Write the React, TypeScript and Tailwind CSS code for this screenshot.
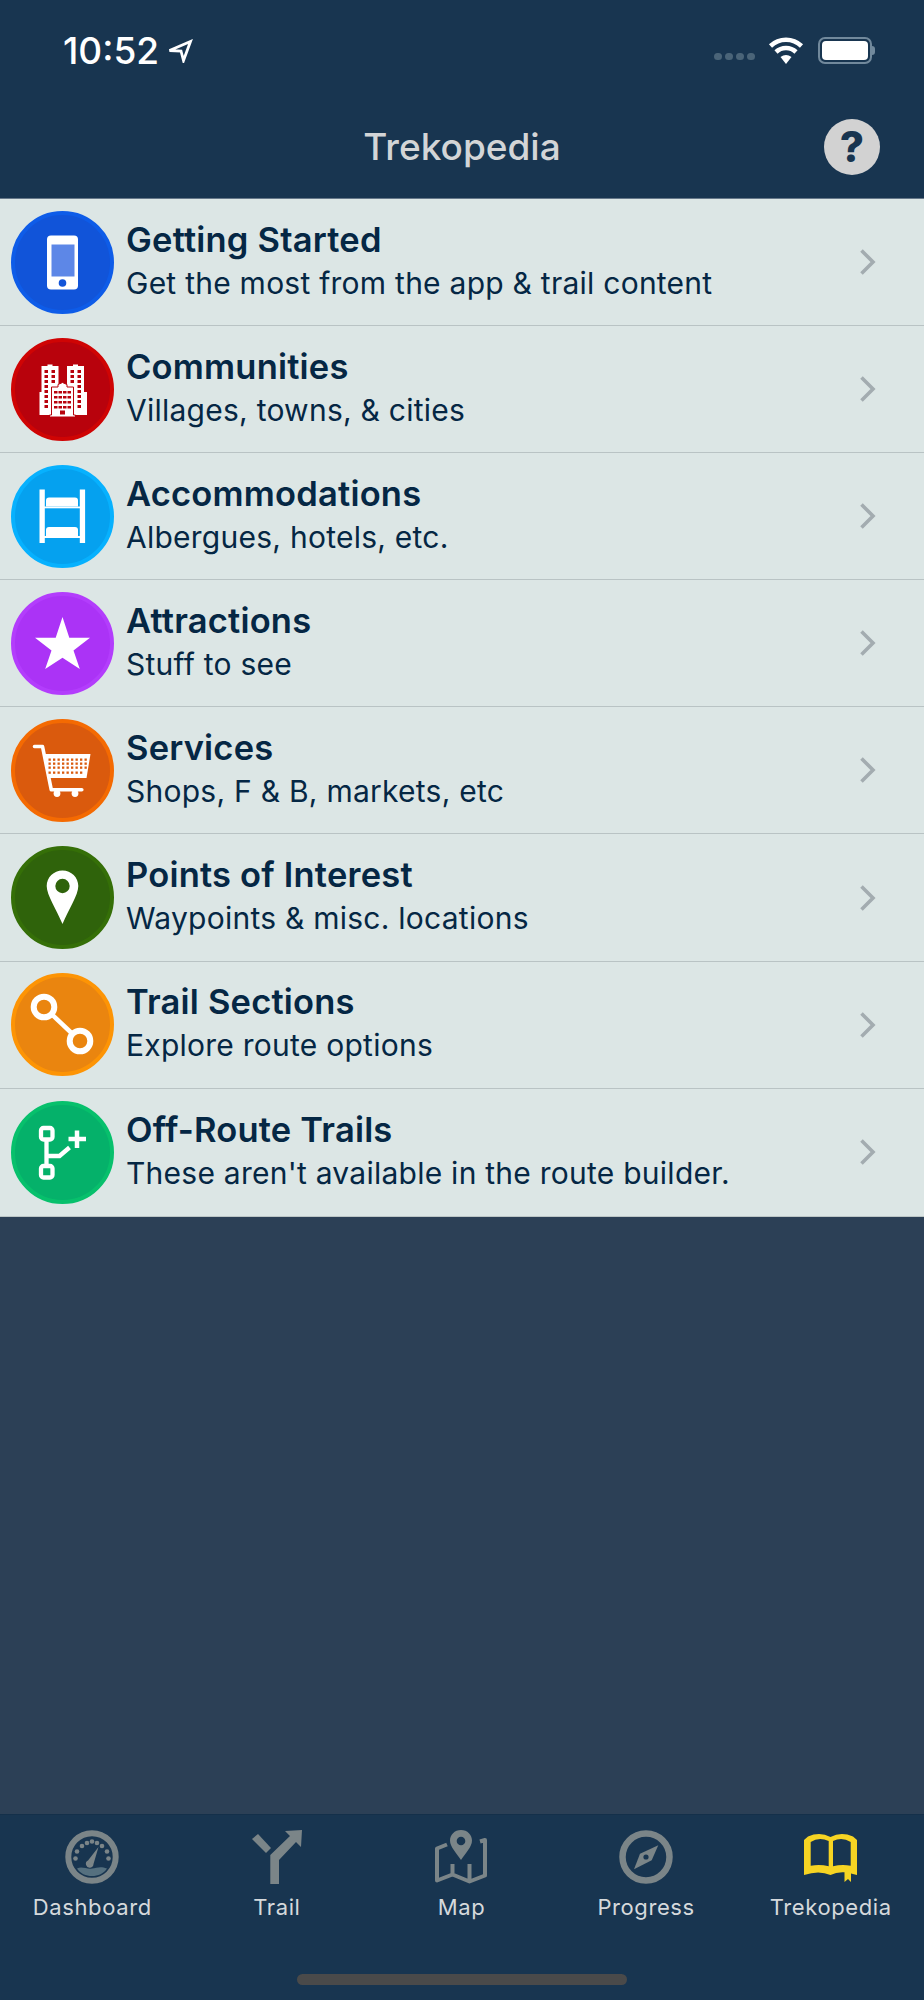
import type { ReactNode } from "react";

const WHITE = "#ffffff";

function Disc({ fill, ring, children }: { fill: string; ring: string; children: ReactNode }) {
  return (
    <svg viewBox="0 0 103 103" className="h-[103px] w-[103px] shrink-0">
      <circle cx="51.5" cy="51.5" r="49.5" fill={fill} stroke={ring} strokeWidth="4" />
      {children}
    </svg>
  );
}

function PhoneIcon() {
  return (
    <Disc fill="#1154d9" ring="#0e5ce8">
      <rect x="36" y="24.5" width="31" height="54" rx="4" fill={WHITE} />
      <rect x="40.5" y="33.5" width="23" height="32" fill="#5d87e7" />
      <circle cx="51.5" cy="72" r="3.8" fill="#1154d9" />
    </Disc>
  );
}

function BuildingsIcon() {
  const red = "#b8020c";
  return (
    <Disc fill={red} ring="#cf0404">
      <path d="M30.500 28h6v-1.500h5v1.500h6v22h-5v27h-14v-23h2zM56 28h6v-1.500h5v1.500h6v26h3v23h-16v-27h-4z" fill={WHITE} />
      {[32, 37, 42, 47, 52, 57, 62, 67].map((y) => (
        <g key={y} fill={red}>
          <rect x="33.500" y={y} width="3.500" height="3" />
          <rect x="66.500" y={y} width="3.500" height="3" />
        </g>
      ))}
      {[32, 37, 42].map((y) => (
        <g key={y} fill={red}>
          <rect x="40.500" y={y} width="3.500" height="3" />
          <rect x="59.500" y={y} width="3.500" height="3" />
        </g>
      ))}
      <path d="M38.500 79v-2h2V49h6.500v-2.500l4.500-2 4.500 2V49h6.500v28h2v2z" fill={WHITE} stroke={red} strokeWidth="1" />
      {[53, 58, 63, 68].map((y) => (
        <g key={y} fill={red}>
          <rect x="43" y={y} width="3.500" height="2.500" />
          <rect x="47.500" y={y} width="3.500" height="2.500" />
          <rect x="52" y={y} width="3.500" height="2.500" />
          <rect x="56.500" y={y} width="3.500" height="2.500" />
        </g>
      ))}
      <rect x="49" y="72.500" width="5" height="4" fill={red} />
    </Disc>
  );
}

function BunkIcon() {
  return (
    <Disc fill="#05a1ef" ring="#07b1fe">
      <rect x="28.500" y="24.500" width="5.300" height="53.500" fill={WHITE} />
      <rect x="68.800" y="24.500" width="5.300" height="53.500" fill={WHITE} />
      <path d="M35 41.500v-6q0-3 3-3h26q3 0 3 3v6z" fill={WHITE} />
      <path d="M35 71v-6q0-3 3-3h26q3 0 3 3v6z" fill={WHITE} />
      <rect x="33" y="41.500" width="36" height="1.800" fill={WHITE} />
      <rect x="33" y="71" width="36" height="2" fill={WHITE} />
    </Disc>
  );
}

function StarIcon() {
  return (
    <Disc fill="#ab33f6" ring="#b33dfc">
      <polygon points="51.500,25 58.300,45.800 79,45.800 62.500,58.400 68.800,77 51.500,65.700 34.200,77 40.500,58.400 24,45.800 44.700,45.800" fill={WHITE} />
    </Disc>
  );
}

function CartIcon() {
  const fill = "#da5a0d";
  return (
    <Disc fill={fill} ring="#f46a02">
      <path d="M23.500 27.500h8l8.800 43.300h30.500" fill="none" stroke={WHITE} strokeWidth="3.600" strokeLinecap="round" strokeLinejoin="round" />
      <polygon points="33,35 79.500,35 75.500,59 37.500,59" fill={WHITE} />
      {[39.500, 43.500, 47.500, 52.500].map((y, r) =>
        [37.500, 42, 46.500, 51, 55.500, 60, 64.500, 69, 73.500].map((x, c) =>
          c === 8 && r === 3 ? null : <rect key={`${r}-${c}`} x={x} y={y} width="2.300" height="2.300" fill={fill} />,
        ),
      )}
      <circle cx="46" cy="74.500" r="3.400" fill={WHITE} />
      <circle cx="64" cy="74.500" r="3.400" fill={WHITE} />
    </Disc>
  );
}

function PinIcon() {
  return (
    <Disc fill="#2f630b" ring="#356f08">
      <path d="M51.500 24.500c-8.800 0-15.800 7-15.800 15.500 0 9 9.500 23 15.800 38 6.300-15 15.800-29 15.800-38 0-8.500-7-15.500-15.800-15.500z" fill={WHITE} />
      <circle cx="51.500" cy="40" r="7.200" fill="#2f630b" />
    </Disc>
  );
}

function SectionIcon() {
  return (
    <Disc fill="#ea850f" ring="#fd9405">
      <line x1="33" y1="34" x2="69" y2="68" stroke={WHITE} strokeWidth="4.500" />
      <circle cx="33" cy="34" r="10.300" fill="#ea850f" stroke={WHITE} strokeWidth="6" />
      <circle cx="69" cy="68" r="10.300" fill="#ea850f" stroke={WHITE} strokeWidth="6" />
    </Disc>
  );
}

function BranchIcon() {
  return (
    <Disc fill="#05b16a" ring="#07c06c">
      <rect x="30" y="27" width="11.500" height="11.500" rx="2.500" fill="none" stroke={WHITE} strokeWidth="4.300" />
      <rect x="30" y="65" width="11.500" height="11.500" rx="2.500" fill="none" stroke={WHITE} strokeWidth="4.300" />
      <path d="M35.500 38v27M35.500 55h13l10-8.500" fill="none" stroke={WHITE} strokeWidth="4.300" />
      <path d="M57.500 38h17.500M66 29.500v17.500" stroke={WHITE} strokeWidth="4.500" />
    </Disc>
  );
}

const GRAY = "#7b8588";

function DashboardTab() {
  const dots = [
    [10.500, 28.500],
    [12, 21.500],
    [17, 16],
    [22, 13],
    [27, 11.500],
    [32, 13],
    [37, 16],
    [42, 21.500],
    [43.500, 28.500],
  ];
  return (
    <svg viewBox="0 0 54 54" className="h-[54px] w-[54px]">
      <circle cx="27" cy="27" r="23.700" fill="none" stroke={GRAY} strokeWidth="6" />
      {dots.map(([x, y]) => (
        <circle key={x} cx={x} cy={y} r="2.300" fill={GRAY} />
      ))}
      <path d="M23 30.500 33.500 17l-5 17a3.800 3.800 0 1 1-5.500-3.500z" fill={GRAY} />
      <path d="M12 38.500c5-2.500 10 1 15 0s9-2.500 15 0c-3 5-9 7.500-15 7.500s-12-2.500-15-7.500z" fill="#55707f" />
    </svg>
  );
}

function TrailTab() {
  return (
    <svg viewBox="0 0 50 54" className="h-[54px] w-[50px]">
      <path d="M18.300 54V25L38 6l-5-5 17-1-1 17-5-5-17 18v23.500q0 .5-.5.500z" fill={GRAY} />
      <polygon points="0,9 6,4 19,18 14,23" fill={GRAY} />
    </svg>
  );
}

function MapTab() {
  return (
    <svg viewBox="0 0 52 54" className="h-[54px] w-[52px]">
      <path d="M12 14.500 2 18.500v32l15.500-6 17 7 15.500-6V10l-5 1.500M17.500 34v10.500M34.500 34v17" fill="none" stroke={GRAY} strokeWidth="4" strokeLinejoin="round" />
      <path d="M26 0c-6.500 0-11 5-11 10.500C15 17 21.500 23 26 30c4.500-7 11-13 11-19.500C37 5 32.500 0 26 0z" fill={GRAY} />
      <circle cx="26" cy="11" r="4.300" fill="#183550" />
    </svg>
  );
}

function CompassTab() {
  return (
    <svg viewBox="0 0 54 54" className="h-[54px] w-[54px]">
      <circle cx="27" cy="27" r="23.500" fill="none" stroke={GRAY} strokeWidth="6.500" />
      <polygon points="39.300,15.300 32.700,30.300 15,39.300 21,23.700" fill={GRAY} />
      <circle cx="27" cy="27" r="2.600" fill="#183550" />
    </svg>
  );
}

function BookTab() {
  return (
    <svg viewBox="0 0 53 49" className="h-[49px] w-[53px]">
      <path
        fillRule="evenodd"
        d="M0 7 4 3.500Q16-1.500 26.500 4 37-1.500 49 3.500L53 7v35l-6-1.500V49l-3-3-3.500 3v-9.800q-8-.5-14 2.800Q15 37 0 42zM6.700 9v23.700q9-1.800 18 .5V8Q15 3.500 6.700 9zM29 8v25.200q9-2.300 17.700-.5V9Q38 3.500 29 8z"
        fill="#f6d423"
      />
    </svg>
  );
}

const rows = [
  { title: "Getting Started", sub: "Get the most from the app & trail content", icon: <PhoneIcon /> },
  { title: "Communities", sub: "Villages, towns, & cities", icon: <BuildingsIcon /> },
  { title: "Accommodations", sub: "Albergues, hotels, etc.", icon: <BunkIcon /> },
  { title: "Attractions", sub: "Stuff to see", icon: <StarIcon /> },
  { title: "Services", sub: "Shops, F & B, markets, etc", icon: <CartIcon /> },
  { title: "Points of Interest", sub: "Waypoints & misc. locations", icon: <PinIcon /> },
  { title: "Trail Sections", sub: "Explore route options", icon: <SectionIcon /> },
  { title: "Off-Route Trails", sub: "These aren't available in the route builder.", icon: <BranchIcon /> },
];

const tabs = [
  { label: "Dashboard", icon: <DashboardTab /> },
  { label: "Trail", icon: <TrailTab /> },
  { label: "Map", icon: <MapTab /> },
  { label: "Progress", icon: <CompassTab /> },
  { label: "Trekopedia", icon: <BookTab /> },
];

function StatusBar() {
  return (
    <div className="flex h-[100px] items-start justify-between pl-[63px] pr-[49px] pt-[31px]">
      <div className="flex items-center gap-[8px]">
        <span className="text-[37px] font-medium leading-[40px] text-white">10:52</span>
        <svg viewBox="0 0 26 24" className="h-[24px] w-[26px]">
          <path d="M2.500 11.500 23.500 2.500l-7 19-2.500-9.500z" fill="none" stroke={WHITE} strokeWidth="2.800" strokeLinejoin="miter" />
        </svg>
      </div>
      <div className="flex items-center pt-[6px]">
        <div className="mr-[13px] mt-[12px] flex gap-[3px]">
          {[0, 1, 2, 3].map((i) => (
            <span key={i} className="h-[7px] w-[8px] rounded-full bg-[#4a6478]" />
          ))}
        </div>
        <svg viewBox="0 0 36 27" className="mr-[14px] h-[27px] w-[36px]">
          <path d="M18 27 12.500 20a9 9 0 0 1 11 0z" fill={WHITE} />
          <path d="M8 15a14.500 14.500 0 0 1 20 0M2.500 9a22.500 22.500 0 0 1 31 0" fill="none" stroke={WHITE} strokeWidth="4.500" />
        </svg>
        <div className="flex items-center">
          <div className="h-[27px] w-[54px] rounded-[7px] border-2 border-[#71899c] p-[2px]">
            <div className="h-full w-full rounded-[4px] bg-white" />
          </div>
          <span className="h-[9px] w-[3px] rounded-r-full bg-[#71899c]" />
        </div>
      </div>
    </div>
  );
}

function NavBar() {
  return (
    <div className="grid h-[98px] grid-cols-[1fr_auto_1fr] items-start pr-[44px] pt-[19px]">
      <div />
      <span className="pl-[44px] text-[37px] font-medium leading-[56px] text-[#d3d5d7]">Trekopedia</span>
      <div className="flex h-[56px] w-[56px] items-center justify-center justify-self-end rounded-full bg-[#d2d2d2] text-[42px] font-extrabold leading-none text-[#183550]">
        ?
      </div>
    </div>
  );
}

export default function App() {
  return (
    <div className="flex h-[2000px] w-[924px] flex-col bg-[#2c4056] font-['Inter',sans-serif]">
      <header className="h-[199px] border-b border-[#66788a] bg-[#183550]">
        <StatusBar />
        <NavBar />
      </header>

      <ul className="border-b border-[#bcc6c6] bg-[#dce6e5]">
        {rows.map((row, i) => (
          <li
            key={row.title}
            className={`flex h-[127.1px] items-center pl-[11px] pr-[48px] ${i < rows.length - 1 ? "border-b border-[#b9c3c4]" : ""}`}
          >
            {row.icon}
            <div className="mb-[2px] ml-[12px] min-w-0 flex-1">
              <div className="text-[34.5px] font-semibold leading-[42px] tracking-[0.2px] text-[#052744]">{row.title}</div>
              <div className="mt-[1px] text-[30px] leading-[42px] tracking-[0.25px] text-[#052744]">{row.sub}</div>
            </div>
            <svg viewBox="0 0 17 28" className="h-[28px] w-[17px]">
              <path d="M2.500 2.500 14 14 2.500 25.500" fill="none" stroke="#a3acb0" strokeWidth="3.600" />
            </svg>
          </li>
        ))}
      </ul>

      <div className="flex-1" />

      <nav className="h-[186px] border-t border-[#14304a] bg-[#183550]">
        <div className="grid grid-cols-5 pr-[1px] pt-[15px]">
          {tabs.map((tab) => (
            <div key={tab.label} className="flex flex-col items-center">
              <div className="flex h-[54px] items-center justify-center">{tab.icon}</div>
              <span className="mt-[7px] text-[22px] leading-[32px] tracking-[0.6px] text-[#d5d9dc]">{tab.label}</span>
            </div>
          ))}
        </div>
        <div className="mx-auto mt-[51px] h-[11px] w-[330px] rounded-full bg-[#4a4a4a]" />
      </nav>
    </div>
  );
}
